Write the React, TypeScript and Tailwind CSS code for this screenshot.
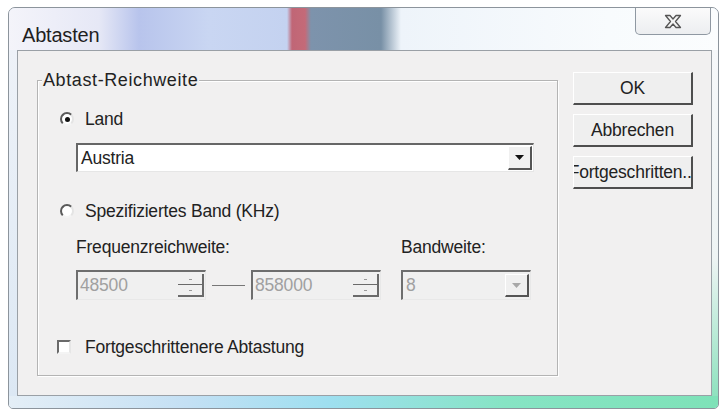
import React from "react";

const FONT = "font-['Liberation_Sans',Arial,sans-serif]";

const Radio = ({ checked }: { checked?: boolean }) => (
    <div className="w-[14px] h-[14px] rounded-full bg-white border-2 border-t-[#5a5a5a] border-l-[#5a5a5a] border-b-[#f4f4f4] border-r-[#e4e4e4] flex items-center justify-center">
        {checked && <div className="w-[5px] h-[5px] rounded-full bg-[#111]" />}
    </div>
);

const Checkbox = () => (
    <div className="w-[14px] h-[14px] bg-white border-2 border-t-[#6a6a6a] border-l-[#6a6a6a] border-b-[#f4f4f4] border-r-[#e6e6e6]" />
);

const Triangle = ({ color }: { color: string }) => (
    <svg width="9" height="5" viewBox="0 0 9 5"><path d="M0 0 L9 0 L4.5 5 Z" fill={color} /></svg>
);

const DropButton = ({ disabled }: { disabled?: boolean }) => (
    <div className="w-[24px] h-full bg-[#f0f0f0] border-t border-l border-white border-r-2 border-b-2 border-r-[#555] border-b-[#555] flex items-center justify-center">
        <Triangle color={disabled ? "#a8a8a8" : "#111"} />
    </div>
);

const Spin = () => (
    <div className="w-[26px] h-full flex flex-col">
        <div className="flex-1 bg-[#f0f0f0] border-r-2 border-b border-[#6a6a6a] flex items-center justify-center">
            <div className="w-[3px] h-[1px] bg-[#999]" />
        </div>
        <div className="flex-1 bg-[#f0f0f0] border-r-2 border-b-2 border-[#6a6a6a] flex items-center justify-center">
            <div className="w-[3px] h-[1px] bg-[#999]" />
        </div>
    </div>
);

const SpinField = ({ value }: { value: string }) => (
    <div className="w-[130px] h-[30px] flex border-t-2 border-l-2 border-[#6e6e6e] border-b border-r border-b-[#e8e8e8] border-r-[#e8e8e8] bg-[#f0f0f0]">
        <div className="flex-1 pl-[2px] flex items-center text-[#a0a0a0]">{value}</div>
        <div className="py-[2px] pr-[1px] h-full"><Spin /></div>
    </div>
);

const WinButton = ({ children }: { children: React.ReactNode }) => (
    <div className="w-[120px] h-[33px] bg-[#efefef] border-t border-l border-white border-r-2 border-b-2 border-r-[#4e4e4e] border-b-[#4e4e4e] flex items-center justify-center overflow-hidden whitespace-nowrap text-[17.5px] text-[#222]">
        {children}
    </div>
);

const CloseGlyph = () => (
    <svg width="18" height="15" viewBox="0 0 18 15">
        <path d="M1.5 1.5 L6 1.5 L9 5 L12 1.5 L16.5 1.5 L11.5 7.5 L16.5 13.5 L12 13.5 L9 10 L6 13.5 L1.5 13.5 L6.5 7.5 Z" fill="#f4f4f4" stroke="#555" strokeWidth="1.3" strokeLinejoin="round" />
    </svg>
);

const App = () => {
    return (
        <div className={`w-[726px] h-[412px] bg-white pt-[7px] pl-[8px] overflow-hidden ${FONT}`}>
            <div className="w-[711px] h-[402px] rounded-t-[7px] rounded-b-[5px] border border-[#8c949c] bg-[#e2eaf4] flex flex-col overflow-hidden">
                {/* title bar, glass shows a blurred background */}
                <div className="h-[42px] flex bg-[linear-gradient(90deg,#f4f4fa_0px,#e6e8f6_90px,#b8c4ec_130px,#c9d6f2_200px,#c4d2f0_278px,#c06676_283px,#c46a78_296px,#7d93ac_302px,#7890a6_372px,#eef4fa_392px,#f8fbfd_600px,#fbfdfe_711px)]">
                    <div className="pl-[13px] pt-[12px] text-[20px] text-[#1f1f1f] tracking-[-0.2px]">Abtasten</div>
                    <div className="flex-1" />
                    <div className="w-[76px] h-[27px] mr-[7px] rounded-b-[5px] border border-t-0 border-[#8f98a2] bg-[linear-gradient(180deg,#fbfbfb,#eceef0)] flex items-center justify-center">
                        <CloseGlyph />
                    </div>
                </div>
                <div className="flex flex-1">
                    <div className="w-[8px] bg-[linear-gradient(180deg,#eef2f8,#dce8f4)]" />
                    {/* client area */}
                    <div className="w-[695px] h-[346px] bg-[#f1f0f0] border border-[#9aa0a6] flex pl-[19px] pt-[21px] text-[17.5px] tracking-[-0.2px] text-[#222]">
                        <div className="relative mt-[8px] w-[521px] h-[296px] border border-[#b4b4b4] shadow-[inset_1px_1px_0_#fff,1px_1px_0_#fff]">
                            <span className="absolute left-[4px] top-[-12px] bg-[#f1f0f0] px-[1px] leading-[22px] text-[18px] tracking-[0.6px]">Abtast-Reichweite</span>
                            <div className="flex flex-col pt-[28px] pl-[22px]">
                                <div className="h-[20px] flex items-center gap-[11px]">
                                    <Radio checked />
                                    <span>Land</span>
                                </div>
                                <div className="ml-[16px] mt-[14px] w-[458px] h-[29px] bg-white flex border-t-2 border-l-2 border-[#666] border-b border-r border-b-[#e6e6e6] border-r-[#e6e6e6]">
                                    <div className="flex-1 flex items-center pl-[3px]">Austria</div>
                                    <div className="py-[1px] pr-[1px] h-full"><DropButton /></div>
                                </div>
                                <div className="h-[20px] mt-[29px] flex items-center gap-[11px]">
                                    <Radio />
                                    <span>Spezifiziertes Band (KHz)</span>
                                </div>
                                <div className="h-[20px] mt-[16px] ml-[16px] flex items-center">
                                    <span className="w-[325px]">Frequenzreichweite:</span>
                                    <span>Bandweite:</span>
                                </div>
                                <div className="h-[30px] mt-[13px] ml-[16px] flex items-center">
                                    <SpinField value="48500" />
                                    <div className="w-[33px] h-[1px] bg-[#777] mx-[6px]" />
                                    <SpinField value="858000" />
                                    <div className="ml-[20px] w-[130px] h-[30px] flex border-t-2 border-l-2 border-[#6e6e6e] border-b border-r border-b-[#e8e8e8] border-r-[#e8e8e8] bg-[#f0f0f0]">
                                        <div className="flex-1 pl-[3px] flex items-center text-[#a0a0a0]">8</div>
                                        <div className="py-[2px] pr-[1px] h-full"><DropButton disabled /></div>
                                    </div>
                                </div>
                                <div className="h-[20px] mt-[37px] -ml-[3px] flex items-center gap-[14px]">
                                    <Checkbox />
                                    <span>Fortgeschrittenere Abtastung</span>
                                </div>
                            </div>
                        </div>
                        <div className="ml-[15px] flex flex-col gap-[9px]">
                            <WinButton>OK</WinButton>
                            <WinButton>Abbrechen</WinButton>
                            <WinButton>Fortgeschritten...</WinButton>
                        </div>
                    </div>
                    <div className="flex-1 bg-[linear-gradient(180deg,#f6f8fa_0%,#eef4f4_60%,#8fe2bf_100%)]" />
                </div>
                <div className="h-[12px] bg-[linear-gradient(90deg,#e4eef6_0%,#c4e0f4_25%,#9edff0_45%,#86e4c4_70%,#7ee2b8_100%)]" />
            </div>
        </div>
    );
};

export default App;
